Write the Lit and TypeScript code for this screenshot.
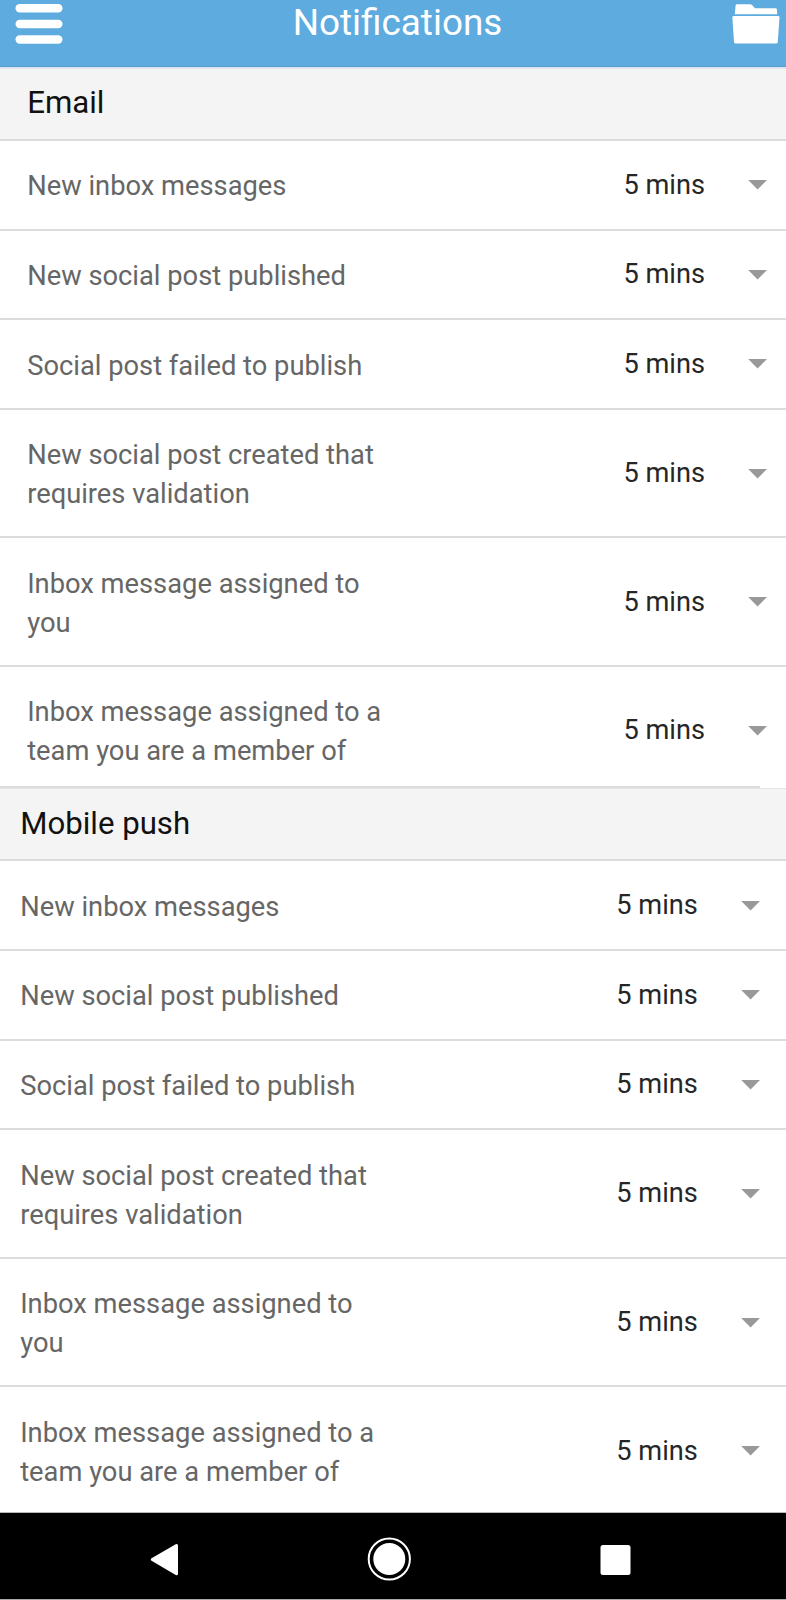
import { LitElement, html, css } from "lit";
import { customElement, property } from "lit/decorators.js";

const ITEMS = [
  ["New inbox messages"],
  ["New social post published"],
  ["Social post failed to publish"],
  ["New social post created that", "requires validation"],
  ["Inbox message assigned to", "you"],
  ["Inbox message assigned to a", "team you are a member of"],
];

@customElement("notification-row")
class NotificationRow extends LitElement {
  @property({ attribute: false }) lines: string[] = [];

  static styles = css`
    :host {
      display: flex;
      box-sizing: border-box;
      align-items: center;
      justify-content: space-between;
      height: var(--row-height);
      padding: var(--top, 1px) var(--right) 0 var(--left);
      border-bottom: var(--line, 2px) solid #dcdcdc;
      background: #fff;
    }
    .label {
      font-size: 27.3px;
      line-height: 39px;
      color: #666;
      padding-top: 3.3px;
    }
    .value {
      display: flex;
      align-items: center;
      gap: 43px;
      font-size: 27.2px;
      line-height: 39px;
      color: #262626;
    }
    svg { display: block; }
  `;

  render() {
    return html`
      <div class="label">${this.lines.map((l) => html`<div>${l}</div>`)}</div>
      <div class="value">
        <span>5 mins</span>
        <svg width="19" height="10" viewBox="0 0 19 10"><path d="M0.2 0H19L9.6 9.5Z" fill="#999" /></svg>
      </div>
    `;
  }
}

@customElement("app-root")
class AppRoot extends LitElement {
  static styles = css`
    :host {
      display: flex;
      flex-direction: column;
      width: 786px;
      height: 1600px;
      overflow: hidden;
      background: #fff;
      font-family: Roboto, sans-serif;
    }
    .bar {
      box-sizing: border-box;
      display: grid;
      grid-template-columns: 64px 1fr 64px;
      height: 69px;
      flex: none;
      background: #5dabdf;
      border-bottom: 2px solid #dae5ef;
      box-shadow: inset 0 -1px #5a9ccf;
    }
    .title {
      margin: 0;
      padding-left: 9px;
      text-align: center;
      font-size: 36.9px;
      font-weight: 400;
      line-height: 46px;
      color: #fff;
    }
    .email { --left: 27.2px; --right: 19px; --heading-line: 68px; }
    .push { --left: 20.2px; --right: 26.2px; --heading-line: 69px; }
    .heading {
      box-sizing: border-box;
      margin: 0;
      height: 72px;
      padding-left: var(--left);
      border-bottom: 2px solid #dcdcdc;
      background: #f4f4f4;
      font-size: 31.2px;
      font-weight: 400;
      line-height: var(--heading-line);
      color: #111;
    }
    .short { --row-height: 89.6px; }
    .tall { --row-height: 128.6px; }
    .end { --row-height: 119.4px; --line: 0px; --top: 8px; }
    .divider {
      box-sizing: border-box;
      height: 3px;
      border-bottom: 1px solid #e4e4e4;
    }
    .divider-line {
      width: 760px;
      height: 2px;
      background: #dcdcdc;
    }
    .nav {
      display: flex;
      flex: none;
      margin-top: auto;
      height: 88px;
      background: #000;
      border-top: 1px solid #b8b8b8;
      border-bottom: 1px solid #aaa;
      box-sizing: border-box;
    }
    svg { display: block; }
  `;

  section(name: string, title: string) {
    return html`<section class=${name}>
      <h2 class="heading">${title}</h2>
      ${ITEMS.map(
        (lines, i) => html`<notification-row
          class=${i === 5 ? "end" : lines.length > 1 ? "tall" : "short"}
          .lines=${lines}
        ></notification-row>`
      )}
    </section>`;
  }

  render() {
    return html`
      <header class="bar">
        <svg width="64" height="66" viewBox="0 0 64 66" fill="#fff">
          <rect x="15.5" y="4" width="47" height="8.5" rx="4.2" />
          <rect x="15.5" y="19.7" width="47" height="8.5" rx="4.2" />
          <rect x="15.5" y="35.2" width="47" height="8.5" rx="4.2" />
        </svg>
        <h1 class="title">Notifications</h1>
        <svg width="64" height="66" viewBox="722 0 64 66" fill="#fff">
          <path d="M734.8 14.2L735.6 5.5Q735.8 4.2 737 4.2H750Q751.2 4.2 752 5L755 8.2H775.5Q776.8 8.2 776.9 9.5L777.2 14.2Z" />
          <path d="M733.8 16H778Q779.6 16 779.5 17.6L777.8 42Q777.6 43.6 776 43.6H735.6Q734.2 43.6 734 42L732.4 17.6Q732.3 16 733.8 16Z" />
        </svg>
      </header>
      ${this.section("email", "Email")}
      <div class="divider"><div class="divider-line"></div></div>
      ${this.section("push", "Mobile push")}
      <nav class="nav">
        <svg width="786" height="86" viewBox="0 1513 786 86" fill="#fff">
          <path d="M152.3 1559.5L176.5 1545.5V1573.8Z" stroke="#fff" stroke-width="3" stroke-linejoin="round" />
          <circle cx="389.3" cy="1559" r="16" />
          <circle cx="389.3" cy="1559" r="20.6" fill="none" stroke="#fff" stroke-width="2" />
          <rect x="600.5" y="1545" width="30" height="30" rx="2.5" />
        </svg>
      </nav>
    `;
  }
}
